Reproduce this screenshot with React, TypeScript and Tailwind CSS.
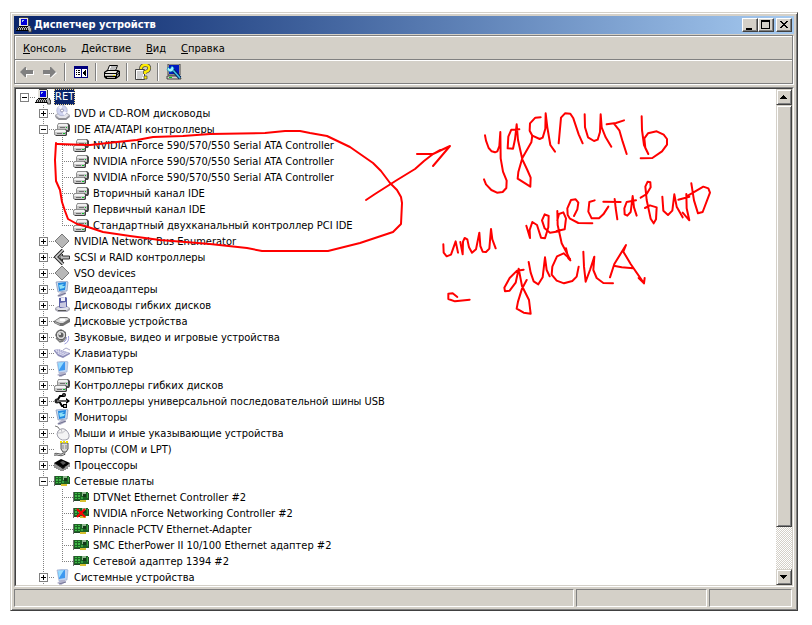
import { useState } from "react";
import type { ReactNode } from "react";

type IconName = keyof typeof icons;

type Device = {
  name: string;
  icon: IconName;
  open?: boolean;
  disabled?: boolean;
  children?: Device[];
};

const icons = {
  root: (
    <>
      <path d="M3 1h1V0h8v1h1v9H3z" fill="#404040" />
      <path d="M3 1h9v8H3z" fill="#e4e2dc" />
      <path d="M5 2h6v6H5z" fill="#0000d8" />
      <path d="M6 3h2v1H7v1H6z" fill="#a6caf0" />
      <path d="M2 10h10l2 4H0z" fill="#b8b8b8" />
      <path d="M2 10.5h10M1 11.5h11M1 12.5h12" stroke="#202020" strokeDasharray="1 1" />
      <path d="M0 13h13v1H0zM3 9h10v1H3z" fill="#000" />
      <path d="M12 9h2v2h2v4h-3v-2h-1z" fill="#b0b0b0" />
      <path d="M12.5 13v2h3v-4h-1V9" stroke="#404040" fill="none" />
    </>
  ),
  cdrom: (
    <>
      <path d="M1 10l3-2h9l3 2v2l-4 3H5l-4-3z" fill="#a8a8b0" />
      <path d="M2 10l3-1h8l2 1-3 3H5z" fill="#e4e4ea" />
      <path d="M5 13h7l3-2v1l-3 3H5l-3-2v-1z" fill="#909096" />
      <circle cx="8" cy="5.5" r="5.2" fill="#d0d4f0" stroke="#a8acc8" strokeWidth=".7" />
      <path d="M8 5.5L4 2l4-2zM8 5.5l5 2-3 3z" fill="#f6f6ff" />
      <circle cx="8" cy="5.5" r="1.5" fill="#fff" stroke="#7d7da0" strokeWidth=".8" />
    </>
  ),
  controller: (
    <>
      <path d="M4 3l1-1h9l2 2v5l-1 2H4z" fill="#484848" />
      <path d="M3 4l2-2h8l1 1v6H3z" fill="#909090" />
      <path d="M4 4l1-1h8l1 1v1H4z" fill="#f0f0f0" />
      <path d="M4 5h10v4H4z" fill="#c4c4c4" />
      <path d="M6 6h5v1H6z" fill="#707070" />
      <path d="M12 6h1v1h-1z" fill="#00c020" />
      <path d="M1 9l1-1h10l1 2v4l-1 1H2l-2-2v-3z" fill="#404040" />
      <path d="M0 10l2-2h9l1 1v5H1l-1-1z" fill="#909090" />
      <path d="M1 10l1-1h9l1 1v1H1z" fill="#f4f4f4" />
      <path d="M1 11h10v3H2l-1-1z" fill="#c8c8c8" />
      <path d="M3 12h5v1H3z" fill="#707070" />
      <path d="M9 12h2v1H9z" fill="#00c020" />
    </>
  ),
  diamond: <path d="M8 1l7 7-7 7-7-7z" fill="#b8b8b8" stroke="#787878" />,
  scsi: (
    <>
      <path d="M9 1L2 8l7 7" fill="none" stroke="#222" strokeWidth="3.6" />
      <path d="M9 1L2 8l7 7" fill="none" stroke="#d0d0d0" strokeWidth="1.6" />
      <path d="M5.5 8l3-3v2h7v3h-7v2z" fill="#bbb" stroke="#222" strokeWidth=".9" />
    </>
  ),
  display: (
    <>
      <path d="M2 1l10-1 2 1-1 9-9 1z" fill="#c8dcf0" stroke="#7080a8" strokeWidth=".6" />
      <path d="M4 2l8-1-1 8-6 1z" fill="#2088e0" />
      <path d="M5 4l5-1-2 2h3l-1 2-4 1z" fill="#8de0f8" />
      <path d="M7 11h4l1 2-6 3-3-1z" fill="#b8b8cc" />
      <path d="M4 15l8-3" stroke="#707090" />
    </>
  ),
  floppy: (
    <>
      <path d="M1 11l3-2h9l3 2v2l-3 2H4l-3-2z" fill="#a8a8b4" />
      <path d="M2 11l3-1h8l2 1-2 2H4z" fill="#e0e0ea" />
      <path d="M4 13h8v1H4z" fill="#555" />
      <path d="M5 1l7-1 1 1v9l-7 1-1-1z" fill="#5a60a8" />
      <path d="M7 1l4-1v4H7z" fill="#f0f0fa" />
      <path d="M6 6l6-1v5H6z" fill="#c8c8e0" />
    </>
  ),
  disk: (
    <>
      <path d="M0 8l6-4h7l3 2v3l-7 4H6L0 10z" fill="#707070" />
      <path d="M1 8l5-3h7l2 1-6 4H6z" fill="#dcdcdc" />
      <ellipse cx="8.5" cy="7" rx="3" ry="1.3" fill="#fff" />
      <path d="M1 9l5 2v1l-5-2z" fill="#b4b4b4" />
    </>
  ),
  sound: (
    <>
      <path d="M3 2l4-2 5 3v7l-3 3-6-3-2-4z" fill="#8c8c8c" />
      <circle cx="7" cy="6" r="4.7" fill="#d8d8d8" stroke="#555" />
      <circle cx="7" cy="6" r="2.5" fill="#606060" />
      <circle cx="6" cy="5" r="1" fill="#fff" />
      <path d="M2 9l4 4 3-1" stroke="#777" strokeWidth="1.5" fill="none" />
      <path d="M12.500 8q.5 3-2.500 5M14.500 7q1 6-4 8" stroke="#9c9cdc" fill="none" />
    </>
  ),
  keyboard: (
    <>
      <path d="M0 5l4-1 12 4v1l-7 4-5-2-4-5z" fill="#8c8cb8" />
      <path d="M1 5l3-1 11 4-6 3-5-2z" fill="#dcdcf0" />
      <path d="M3 5l9 4M5 5l8 3M3 7l7 3" stroke="#9090c0" strokeDasharray="1 1" />
      <path d="M9 5l3-2 4 2" stroke="#a8a8c8" fill="none" />
    </>
  ),
  computer: (
    <>
      <path d="M3 1l9-1 2 1-1 10-8 1z" fill="#c0d4f0" stroke="#8898c0" strokeWidth=".5" />
      <path d="M4 2l7-1v8l-6 1z" fill="#3c98f0" />
      <path d="M4 2l6-1-5 8z" fill="#98dcff" />
      <path d="M7 11h4l1 2-5 3-4-2z" fill="#b4b4cc" />
      <path d="M5 15l7-2" stroke="#777799" />
    </>
  ),
  usb: (
    <>
      <path d="M1 8h12M3 8l3-5h4M5 8l3 5h3" stroke="#000" strokeWidth="2" fill="none" />
      <circle cx="3" cy="8" r="2.5" fill="#222" />
      <circle cx="10" cy="2" r="2" />
      <path d="M9 11h4v4H9zM12 5l4 3-4 3z" />
      <path d="M3 8h10" stroke="#bbb" />
      <circle cx="10" cy="2" r=".7" fill="#bbb" />
      <path d="M10 12h2v2h-2z" fill="#bbb" />
    </>
  ),
  mouse: (
    <>
      <path d="M1 1l3 1 2 3" stroke="#777" fill="none" />
      <path d="M4 6q4-4 8-1 5 5 2 9-6 3-10-2-2-3 0-6z" fill="#f4f4f4" stroke="#a0a0ac" />
      <path d="M4 8q5 1 8-3M7 4l1 3" stroke="#a8a8b0" fill="none" strokeWidth=".7" />
    </>
  ),
  port: (
    <>
      <path d="M7 2h7v6l-2 3H9L7 8z" fill="#d8d8d8" stroke="#555" />
      <path d="M6 1h9" stroke="#f0e000" strokeWidth="2" strokeDasharray="2 1" />
      <path d="M9 4v4M12 4v4" stroke="#888" />
      <path d="M10 11v2l-3 1-5-1-2 1" stroke="#444" strokeWidth="2.4" fill="none" />
      <path d="M10 11v2l-3 1-5-1-2 1" stroke="#ccc" fill="none" />
    </>
  ),
  cpu: (
    <>
      <path d="M0 6l7-4 9 4-7 6z" fill="#000" />
      <path d="M1 6v5M3 7v5M5 8v5M7 9v5M9 10v4M11 9v4M13 8v4M15 6v4" stroke="#222" />
      <path d="M2 8v2M4 9v3M6 10v3M12 9v3M14 8v2" stroke="#aaa" strokeWidth=".7" />
      <path d="M6 5l3-1 3 2-3 2z" fill="#555" />
    </>
  ),
  network: (
    <>
      <path d="M0 3h1v10H0z" fill="#707070" />
      <path d="M1 3h14v8H1z" fill="#1c6424" />
      <path d="M2 4h2v1H2zM5 4h2v1H5zM2 6h2v2H2zM5 6h2v2H5zM2 9h2v1H2zM5 9h2v1H5z" fill="#40b848" />
      <path d="M9 3h4v4H9z" fill="#90b890" />
      <path d="M10 5h3v3h-3z" fill="#143818" />
      <path d="M8 8h2v2H8zM14 4h1v5h-1z" fill="#38a040" />
      <path d="M15 4h1v7h-1zM1 11h6v1H1z" fill="#204828" />
      <path d="M7 11h6v2H7z" fill="#d8c030" />
    </>
  ),
};

const sataName = "NVIDIA nForce 590/570/550 Serial ATA Controller";

const devices: Device[] = [
  { name: "DVD и CD-ROM дисководы", icon: "cdrom" },
  {
    name: "IDE ATA/ATAPI контроллеры",
    icon: "controller",
    open: true,
    children: [
      { name: sataName, icon: "controller" },
      { name: sataName, icon: "controller" },
      { name: sataName, icon: "controller" },
      { name: "Вторичный канал IDE", icon: "controller" },
      { name: "Первичный канал IDE", icon: "controller" },
      { name: "Стандартный двухканальный контроллер PCI IDE", icon: "controller" },
    ],
  },
  { name: "NVIDIA Network Bus Enumerator", icon: "diamond" },
  { name: "SCSI и RAID контроллеры", icon: "scsi" },
  { name: "VSO devices", icon: "diamond" },
  { name: "Видеоадаптеры", icon: "display" },
  { name: "Дисководы гибких дисков", icon: "floppy" },
  { name: "Дисковые устройства", icon: "disk" },
  { name: "Звуковые, видео и игровые устройства", icon: "sound" },
  { name: "Клавиатуры", icon: "keyboard" },
  { name: "Компьютер", icon: "computer" },
  { name: "Контроллеры гибких дисков", icon: "controller" },
  { name: "Контроллеры универсальной последовательной шины USB", icon: "usb" },
  { name: "Мониторы", icon: "display" },
  { name: "Мыши и иные указывающие устройства", icon: "mouse" },
  { name: "Порты (COM и LPT)", icon: "port" },
  { name: "Процессоры", icon: "cpu" },
  {
    name: "Сетевые платы",
    icon: "network",
    open: true,
    children: [
      { name: "DTVNet Ethernet Controller #2", icon: "network" },
      { name: "NVIDIA nForce Networking Controller #2", icon: "network", disabled: true },
      { name: "Pinnacle PCTV Ethernet-Adapter", icon: "network" },
      { name: "SMC EtherPower II 10/100 Ethernet адаптер #2", icon: "network" },
      { name: "Сетевой адаптер 1394 #2", icon: "network" },
    ],
  },
  { name: "Системные устройства", icon: "computer" },
];

const menus = ["Консоль", "Действие", "Вид", "Справка"];

function DeviceIcon({ name, disabled }: { name: IconName; disabled?: boolean }) {
  return (
    <svg viewBox="0 0 16 16" className="h-4 w-4 shrink-0" aria-hidden="true">
      {icons[name]}
      {disabled && <path d="M4 4l8 8M12 4l-8 8" stroke="#f00" strokeWidth="2" />}
    </svg>
  );
}

// Dotted connector lines of one indent column
function Guide({ up, down, right }: { up?: boolean; down?: boolean; right?: boolean }) {
  return (
    <svg viewBox="0 0 19 16" className="h-4 w-[19px] shrink-0" shapeRendering="crispEdges" aria-hidden="true">
      <g stroke="#808080" strokeDasharray="1 1">
        {up && <path d="M8.5 0v8" />}
        {down && <path d="M8.5 8v8" />}
        {right && <path d="M8 8.5h11" />}
      </g>
    </svg>
  );
}

function Expander({ open, label, root, onClick }: { open: boolean; label: string; root?: boolean; onClick: () => void }) {
  return (
    <button type="button" aria-label={label} aria-expanded={open} onClick={onClick} className="h-4 w-[19px] shrink-0">
      <svg viewBox="0 0 19 16" className="h-4 w-[19px]" shapeRendering="crispEdges">
        <path d={root ? "M8 8.5h11" : "M8.5 0v16M8 8.5h11"} stroke="#808080" strokeDasharray="1 1" />
        <path d="M4.5 4.5h8v8h-8z" fill="#fff" stroke="#808080" />
        <path d={open ? "M6 8.5h5" : "M6 8.5h5M8.5 6v5"} stroke="#000" />
      </svg>
    </button>
  );
}

function DeviceGroup({ device }: { device: Device }) {
  const [open, setOpen] = useState(Boolean(device.open));
  const children = device.children ?? [];

  return (
    <li>
      <div className="flex h-4 items-start">
        <span className="w-[19px] shrink-0" />
        <Expander open={open} label={device.name} onClick={() => setOpen(!open)} />
        <DeviceIcon name={device.icon} />
        <span className="mt-px ml-1 whitespace-nowrap">{device.name}</span>
      </div>
      {open && children.length > 0 && (
        <ul>
          {children.map((child, i) => (
            <li key={i} className="flex h-4 items-start">
              <span className="w-[19px] shrink-0" />
              <Guide up down />
              <Guide up down={i < children.length - 1} right />
              <DeviceIcon name={child.icon} disabled={child.disabled} />
              <span className="mt-px ml-1 whitespace-nowrap">{child.name}</span>
            </li>
          ))}
        </ul>
      )}
    </li>
  );
}

function CaptionButton({ label, children }: { label: string; children: ReactNode }) {
  return (
    <button
      type="button"
      aria-label={label}
      className="h-[14px] w-4 border border-t-white border-r-[#404040] border-b-[#404040] border-l-white bg-[#d4d0c8] shadow-[inset_-1px_-1px_0_#808080]"
    >
      <svg viewBox="0 0 14 12" className="h-3 w-[14px]" shapeRendering="crispEdges">
        {children}
      </svg>
    </button>
  );
}

function ScrollButton({ label, path }: { label: string; path: string }) {
  return (
    <button
      type="button"
      aria-label={label}
      className="h-4 w-4 shrink-0 border border-t-[#d4d0c8] border-r-[#404040] border-b-[#404040] border-l-[#d4d0c8] bg-[#d4d0c8] shadow-[inset_1px_1px_0_#fff,inset_-1px_-1px_0_#808080]"
    >
      <svg viewBox="0 0 14 14" className="h-[14px] w-[14px]" shapeRendering="crispEdges">
        <path d={path} />
      </svg>
    </button>
  );
}

function ToolButton({ label, children }: { label: string; children: ReactNode }) {
  return (
    <button type="button" aria-label={label} className="flex h-[22px] w-[23px] items-center justify-center">
      <svg viewBox="0 0 16 16" className="h-4 w-4">
        {children}
      </svg>
    </button>
  );
}

function Separator() {
  return <span className="mx-[3px] h-[18px] w-[2px] border-r border-l border-r-white border-l-[#808080]" />;
}

function Toolbar() {
  return (
    <div className="flex h-[23px] items-center border-t border-white">
      <ToolButton label="Назад">
        <path d="M2 9l6-5v3h7v4H8v3z" fill="#fff" />
        <path d="M1 8l5-5h1v3h7v4H7v3H6z" fill="#808080" />
      </ToolButton>
      <ToolButton label="Вперед">
        <path d="M15 9L9 4v3H2v4h7v3z" fill="#fff" />
        <path d="M14 8L9 3H8v3H1v4h7v3h1z" fill="#808080" />
      </ToolButton>
      <Separator />
      <ToolButton label="Дерево консоли">
        <g shapeRendering="crispEdges">
          <path d="M1 2h14v12H1z" fill="#00007c" />
          <path d="M2 5h6v8H2zM9 5h5v8H9z" fill="#fff" />
          <path d="M3 6h1v1H3zM5 6h2v1H5zM3 8h1v1H3zM5 8h2v1H5zM3 10h1v1H3zM5 10h2v1H5z" />
          <path d="M12 6h1v6h-1v-1h-1v-1h-1V8h1V7h1z" />
        </g>
      </ToolButton>
      <Separator />
      <ToolButton label="Печать">
        <path d="M5.500 1.500h8l-2 5h-8z" fill="#fff" stroke="#000" />
        <path d="M7 3h5M6 5h5" stroke="#555" strokeWidth=".8" />
        <path d="M0 8l3-2h11l2 1v5l-4 3H2l-2-2z" fill="#000" />
        <path d="M2 8l2-1h9l-1 2H1zM1 10h11v1H1z" fill="#e8e6e0" />
        <path d="M1 11h11v1H1zM3 13h8v1H3z" fill="#b8b4ac" />
        <path d="M13 9l2-1v1l-2 1zM13 11l2-1v1l-2 2z" fill="#a8a8a8" />
        <path d="M9 11h2v1H9z" fill="#e8e000" />
      </ToolButton>
      <Separator />
      <ToolButton label="Справка">
        <path d="M.5 5.500h9v10h-9z" fill="#fff" stroke="#444" />
        <path d="M2 8h6M2 10h6M2 12h6M2 14h5" stroke="#888" strokeWidth=".8" />
        <path d="M6 5q0-4 4-4 5 0 4 4 0 2-4 3v2" fill="none" stroke="#444" strokeWidth="3.800" />
        <path d="M6 5q0-4 4-4 5 0 4 4 0 2-4 3v2" fill="none" stroke="#ffec00" strokeWidth="2.400" />
        <path d="M9 12h3v3H9z" fill="#ffec00" stroke="#444" strokeWidth=".7" />
      </ToolButton>
      <Separator />
      <ToolButton label="Обновить конфигурацию оборудования">
        <path d="M2 0h12v11H2z" fill="#d4d0c8" stroke="#222" strokeWidth=".8" />
        <path d="M3 1h10v9H3z" fill="#0018c0" />
        <path d="M1 12h13l1 3H1z" fill="#d4d0c8" stroke="#222" strokeWidth=".8" />
        <path d="M6 5l8 9" stroke="#002060" strokeWidth="3.400" />
        <path d="M6 5l8 9" stroke="#40c0e8" strokeWidth="1.600" />
        <path d="M2 3l2 2 2-3 2 2-1 3-3 1-3-2z" fill="#a0f0ff" stroke="#0080b0" strokeWidth=".6" />
        <path d="M3 13h3v1H3z" fill="#00d020" />
      </ToolButton>
    </div>
  );
}

// Handwritten notes in red marker
function Annotations() {
  return (
    <svg
      viewBox="0 0 812 625"
      className="pointer-events-none absolute top-0 left-0 h-[625px] w-[812px]"
      fill="none"
      stroke="#f00"
      strokeLinecap="round"
      strokeLinejoin="round"
      aria-hidden="true"
    >
      <g strokeWidth="2">
        <path d="M56 143L55 160L56 181L60 190L62 202L65 211L68 219L77 224L88 227L103 232L130 236L160 240L210 244L247 248L262 251H328L360 243L393 232L401 224L402 203L401 197L397 190L390 183L381 171L373 163L350 147L327 136L310 133L300 131H285L265 133L210 134L183 136L153 137L137 140L117 142L90 145L57 144" />
        <path d="M366 200L375 194L397 180L415 169L424 161L433 154L450 146M417 154H433L440 150M450 146L433 166" />
      </g>
      <g strokeWidth="6">
        <g transform="translate(430 90) scale(0.33333)">
          <path d="M165 136L168 152L176 174L185 184L195 187L202 184L208 168L211 126L212 205L219 245L230 272L229 294L218 306L201 308L184 300L168 283L162 268" />
          <path d="M268 118L244 119L235 140L233 175L249 176L255 148L260 103L264 150L277 208L292 240L302 263L301 290L263 266L265 246L277 204L304 157L307 137" />
          <path d="M332 82L316 83L300 100L299 122L307 137L329 147L338 143L346 116L347 70L352 112L361 165L375 185" />
          <path d="M386 160L393 83L405 70L421 71L430 85L446 133L458 160" />
          <path d="M464 73L465 112L474 142L492 153L503 149L510 126L512 73L515 112L527 142L544 170" />
          <path d="M530 103L558 99L582 91M552 101L568 121L578 155L590 192" />
          <path d="M635 79L636 120L642 165L655 192L646 174L643 145L654 130L680 124L701 134L711 147V164L696 184L667 204L632 205" />
        </g>
        <g transform="translate(430 180) scale(0.33333)">
          <path d="M40 193L41 218L50 229L63 224L77 184L84 218M91 186L98 223M98 223L99 185L104 174L112 178L117 202L126 218L138 208L148 158L151 198L158 215L168 216L178 206L183 147L187 178L197 205" />
          <path d="M289 137L300 174L299 150L307 126L321 135L333 173L345 175L355 142L356 108L344 103L336 121L344 145L360 158L388 154" />
          <path d="M382 93L383 135L395 190L410 218L421 241M408 205L415 235L421 241M382 121L387 102L400 97L408 115L404 148L380 153" />
          <path d="M432 108L442 88L445 68L437 58L423 60L412 85L413 105L420 116L445 129L487 130M494 61L478 66L475 95L485 115H507L520 103L535 80M520 65L572 66M554 57L557 84L562 118M618 61L590 66L583 85L584 103L592 107L602 96L608 48L612 82L620 107" />
          <path d="M632 53L650 42L662 22L661 7L653 5L646 20L650 60L662 116L671 130L678 118L680 82L660 76L645 84M697 50L700 92L714 105L727 92L733 43L740 80L758 112M745 59L778 50M769 42L770 85L778 121L758 98M784 10L792 61L804 100L818 96L840 38L835 25L820 20L770 49" />
          <path d="M281 269L261 272L239 294L223 323L225 334L239 332L257 308L266 266L276 318L297 360L302 401L281 398L260 386L264 365L276 326L290 300" />
          <path d="M296 246L302 278L311 304L325 313L338 292L345 232L350 270L359 289M420 237L401 220L381 229L367 260L365 284L380 302L402 310L427 303L440 290L446 260M460 215L462 260L467 305L480 270L493 230L490 270L500 294L520 309L549 310" />
          <path d="M540 292L553 252L588 195L580 215L602 252L642 310L644 294M555 258L575 262L609 265M626 294L642 310" />
          <path d="M82 351L68 340L55 341V357L75 364L119 359" />
        </g>
      </g>
    </svg>
  );
}

export default function App() {
  const [rootOpen, setRootOpen] = useState(true);

  return (
    <div className="relative min-h-screen bg-white pt-3 pr-[14px] pb-[14px] pl-[10px] font-['DejaVu_Sans_Condensed','DejaVu_Sans',sans-serif] text-[11px] leading-4 text-black">
      <main className="border border-t-[#d4d0c8] border-r-[#404040] border-b-[#404040] border-l-[#d4d0c8] bg-[#d4d0c8] p-[3px] shadow-[inset_1px_1px_0_#fff,inset_-1px_-1px_0_#808080]">
        <header className="flex h-[18px] items-center bg-linear-to-r from-[#0a246a] to-[#a6caf0] px-[2px]">
          <DeviceIcon name="root" />
          <h1 className="ml-[2px] flex-1 font-bold text-white">Диспетчер устройств</h1>
          <CaptionButton label="Свернуть">
            <path d="M3 9h6v2H3z" />
          </CaptionButton>
          <CaptionButton label="Развернуть">
            <path d="M2 1h9v9H2zM3 3v6h7V3z" fillRule="evenodd" />
          </CaptionButton>
          <span className="w-[2px]" />
          <CaptionButton label="Закрыть">
            <path d="M3 2h2v1h1v1h2V3h1V2h2v1h-1v1H9v1H8v1h1v1h1v1h1v1H9V8H8V7H6v1H5v1H3V8h1V7h1V6h1V5H5V4H4V3H3z" />
          </CaptionButton>
        </header>

        <div className="mt-px mr-px border border-[#808080] shadow-[1px_1px_0_#fff,inset_1px_1px_0_#fff]">
          <nav className="flex h-6 items-center gap-[3px] border-b border-[#808080] pl-[2px]">
            {menus.map((menu) => (
              <button key={menu} type="button" className="px-[6px] pt-[2px]">
                <span className="underline">{menu[0]}</span>
                {menu.slice(1)}
              </button>
            ))}
          </nav>
          <Toolbar />
        </div>

        <section className="mt-[3px] flex border border-t-[#808080] border-r-white border-b-white border-l-[#808080]">
          <div className="flex flex-1 border border-t-[#404040] border-r-[#d4d0c8] border-b-[#d4d0c8] border-l-[#404040] bg-white">
            <div className="min-w-0 flex-1 overflow-hidden">
              <div className="flex h-4 items-center">
                <Expander root open={rootOpen} label="RET" onClick={() => setRootOpen(!rootOpen)} />
                <DeviceIcon name="root" />
                <span className="ml-[3px] border border-dotted border-[#f5db95] bg-[#0a246a] leading-[14px] text-white">RET</span>
              </div>
              {rootOpen && (
                <ul>
                  {devices.map((device) => (
                    <DeviceGroup key={device.name} device={device} />
                  ))}
                </ul>
              )}
            </div>
            <div className="flex w-4 flex-col bg-[repeating-conic-gradient(#fff_0_25%,#d4d0c8_0_50%)] bg-[length:2px_2px]">
              <ScrollButton label="Вверх" path="M6 5h1v1h1v1h1v1h1v1H3V8h1V7h1V6h1z" />
              <div className="flex-1">
                <div className="h-[91%] border border-t-[#d4d0c8] border-r-[#404040] border-b-[#404040] border-l-[#d4d0c8] bg-[#d4d0c8] shadow-[inset_1px_1px_0_#fff,inset_-1px_-1px_0_#808080]" />
              </div>
              <ScrollButton label="Вниз" path="M3 5h7v1H9v1H8v1H7v1H6V8H5V7H4V6H3z" />
            </div>
          </div>
        </section>

        <footer className="mt-[2px] mr-[2px] flex h-[18px] gap-[2px]">
          <div className="flex-1 border border-t-[#808080] border-r-white border-b-white border-l-[#808080]" />
          <div className="w-[131px] border border-t-[#808080] border-r-white border-b-white border-l-[#808080]" />
          <div className="w-[83px] border border-t-[#808080] border-r-white border-b-white border-l-[#808080]" />
        </footer>
      </main>
      <Annotations />
    </div>
  );
}
